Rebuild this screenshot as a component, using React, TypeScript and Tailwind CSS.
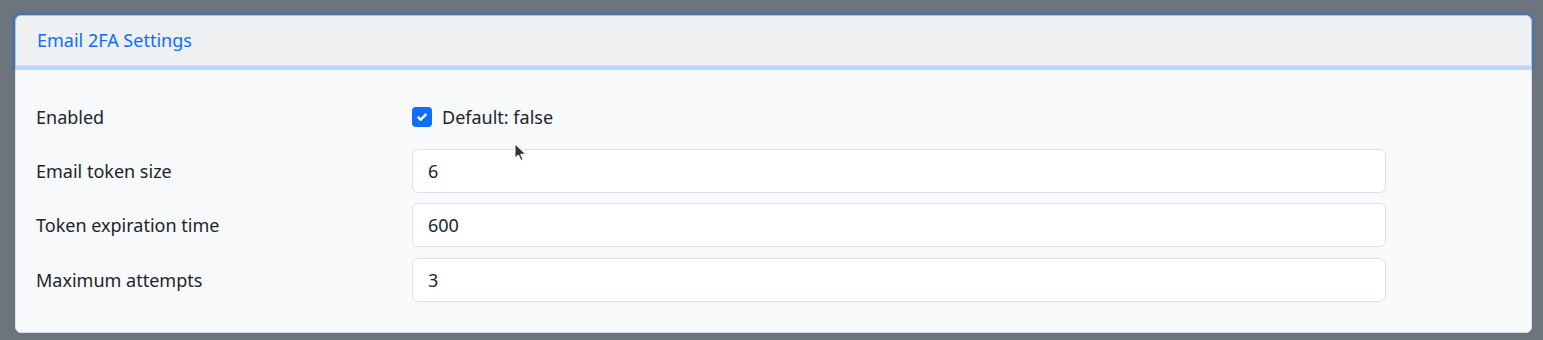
import React from "react";

const fields = [
  { label: "Email token size", value: "6" },
  { label: "Token expiration time", value: "600" },
  { label: "Maximum attempts", value: "3" },
];

const App = () => {
  return (
    <div
      className="relative w-[1543px] h-[340px] bg-[#6c757d] pt-[15px] pl-[15px]"
      style={{ fontFamily: '"Noto Sans", "Open Sans", sans-serif' }}
    >
      <div className="w-[1517px] rounded-[6px] border border-[#dee2e6] bg-[#f8f9fa]">
        <div className="relative z-10 h-[50px] flex items-center px-[21px] rounded-t-[5px] bg-[#eff0f2] border-b border-[#dee2e6] shadow-[0_0_0_4px_rgba(13,110,253,0.25)]">
          <span className="text-[18px] text-[#0d6efd]">Email 2FA Settings</span>
        </div>
        <div className="flex flex-col pt-[29px] pb-[30px] px-[20px] text-[18px] text-[#212529]">
          <div className="flex items-center h-[44px]">
            <div className="w-[376px]">Enabled</div>
            <label className="flex items-center gap-[10px]">
              <span className="w-[20px] h-[20px] rounded-[4px] bg-[#0d6efd] flex items-center justify-center">
                <svg width="16" height="16" viewBox="0 0 20 20">
                  <path
                    d="M5.5 10.5l3 3l6-6.5"
                    fill="none"
                    stroke="#fff"
                    strokeWidth="3"
                    strokeLinecap="round"
                    strokeLinejoin="round"
                  />
                </svg>
              </span>
              <span>Default: false</span>
            </label>
          </div>
          {fields.map((f, i) => (
            <div
              key={f.label}
              className={`flex items-center h-[44px] ${i === 2 ? "mt-[11px]" : "mt-[10px]"}`}
            >
              <div className="w-[376px]">{f.label}</div>
              <input
                readOnly
                value={f.value}
                className="w-[974px] h-[44px] rounded-[6px] border border-[#dee2e6] bg-white px-[15px] text-[18px] text-[#212529] outline-none"
                style={{ fontFamily: "inherit" }}
              />
            </div>
          ))}
        </div>
      </div>
      {/* mouse pointer */}
      <svg
        className="absolute left-[514px] top-[143px]"
        width="14"
        height="20"
        viewBox="0 0 14 20"
      >
        <path d="M1 1 L1 15 L4.5 12 L7 17.5 L9 16.5 L6.7 11.3 L11.5 11 Z" fill="#333" stroke="#fff" strokeWidth="1" />
      </svg>
    </div>
  );
};

export default App;
